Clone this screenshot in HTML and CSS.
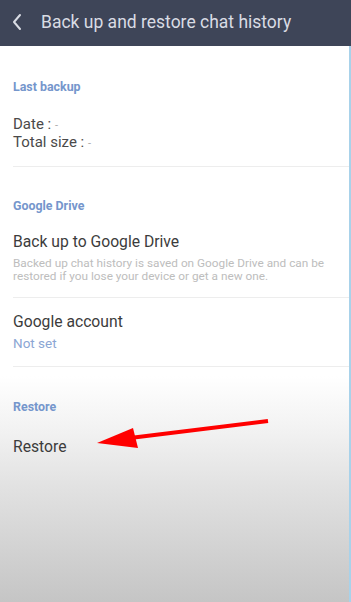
FILE: index.html
```html
<!DOCTYPE html>
<html lang="en">
<head>
  <meta charset="UTF-8">
  <title>Back up and restore chat history</title>
  <link rel="stylesheet" href="styles.css">
</head>
<body>
  <header class="topbar">
    <svg class="back-icon" width="12" height="18" viewBox="0 0 12 18">
      <path d="M9 2 L3 9 L9 16" fill="none" stroke="#d9dce4" stroke-width="2" stroke-linecap="round" stroke-linejoin="round"/>
    </svg>
    <h1>Back up and restore chat history</h1>
  </header>
  <main class="content">
    <section class="section first">
      <h2 class="section-title">Last backup</h2>
      <div class="item info">
        <div class="info-line">Date : <span class="dash">-</span></div>
        <div class="info-line">Total size : <span class="dash">-</span></div>
      </div>
    </section>
    <section class="section">
      <h2 class="section-title">Google Drive</h2>
      <div class="item">
        <div class="item-title">Back up to Google Drive</div>
        <div class="item-desc">Backed up chat history is saved on Google Drive and can be restored if you lose your device or get a new one.</div>
      </div>
      <div class="item">
        <div class="item-title">Google account</div>
        <div class="item-value">Not set</div>
      </div>
    </section>
    <section class="section restore">
      <h2 class="section-title">Restore</h2>
      <div class="item last">
        <div class="item-title">Restore</div>
      </div>
    </section>
    <!-- annotation arrow over the screenshot -->
    <svg class="arrow" width="351" height="602" viewBox="0 0 351 602">
      <line x1="268" y1="421" x2="130" y2="438" stroke="#f00" stroke-width="4"/>
      <polygon points="97,443 133,428 138,448" fill="#f00"/>
    </svg>
  </main>
</body>
</html>
```
FILE: styles.css
```css
body {
  margin: 0;
  font-family: Roboto, 'Noto Sans', sans-serif;
  background: #fff;
  width: 351px;
  height: 602px;
  overflow: hidden;
}
.topbar {
  height: 46px;
  background: #3e4558;
  display: flex;
  align-items: center;
  padding-left: 11px;
  box-sizing: border-box;
}
.back-icon {
  margin-right: 18px;
  margin-top: -2px;
}
.topbar h1 {
  margin: 0;
  font-size: 17.5px;
  font-weight: 400;
  color: #d9dce4;
  margin-top: -2px;
}
.content {
  height: 556px;
  box-sizing: border-box;
  border-right: 2px solid #a8d2ea;
  background: linear-gradient(to bottom, #fff 0, #fff 330px, #f3f3f3 380px, #e2e2e2 440px, #c5c5c5 556px);
  position: relative;
}
.section {
  padding: 31px 0 0 13px;
}
.section.first {
  padding-top: 33px;
}
.section.restore {
  padding-top: 32px;
}
.section-title {
  margin: 0;
  font-size: 12.4px;
  line-height: 16px;
  font-weight: 700;
  color: #7596cc;
}
.item {
  border-bottom: 1px solid #ededed;
  padding: 18px 13px 14px 0;
}
.item + .item {
  padding-top: 14px;
}
.item.info {
  padding-top: 21px;
  padding-bottom: 14px;
}
.item.last {
  border-bottom: none;
  padding-top: 22px;
}
.info-line {
  font-size: 15px;
  line-height: 17px;
  color: #4a4a4a;
}
.dash {
  color: #aaa;
  font-size: 11px;
}
.item-title {
  font-size: 15.7px;
  line-height: 20px;
  color: #3c3c3c;
}
.item-desc {
  font-size: 11.8px;
  line-height: 13px;
  color: #bdbdbd;
  margin-top: 5px;
}
.item-value {
  font-size: 13.5px;
  line-height: 18px;
  color: #8ba6d4;
  margin-top: 2px;
}
.arrow {
  position: absolute;
  top: -46px;
  left: 0;
}
```
